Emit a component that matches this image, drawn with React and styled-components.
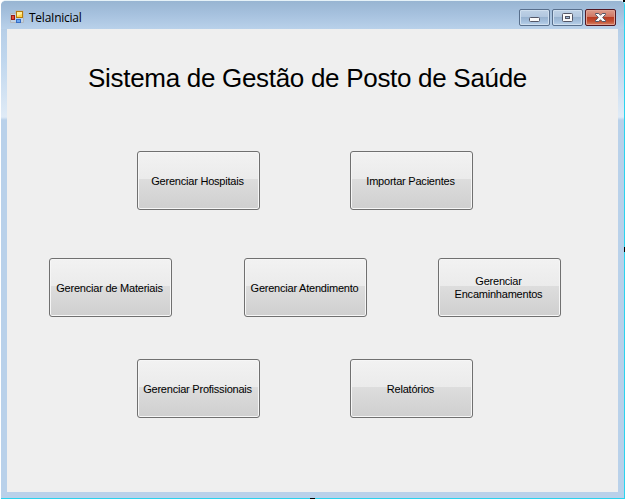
import React from "react";
import styled, { createGlobalStyle } from "styled-components";

const GlobalStyle = createGlobalStyle`
  html, body { margin: 0; padding: 0; background: #fff; overflow: hidden; }
  * { box-sizing: border-box; }
`;

const Stage = styled.div`
  position: relative;
  width: 625px;
  height: 499px;
  padding-left: 1px;
  background: #fff;
`;

const Window = styled.main`
  width: 624px;
  height: 499px;
  display: flex;
  flex-direction: column;
  border-right: 1px solid #2bd3ee;
  border-bottom: 1px solid #2bd3ee;
  border-top: 1px solid #e6f2f8;
  border-radius: 5px 5px 0 0;
  background:
    linear-gradient(180deg, #98b5d2 0, #a5c1dd 14px, #b7cfe8 30px, #c0d7ee 60px, #dbe8f5 108px, #e0ebf7 116px, #b9d1ea 119px, #b9d1ea 100%);
`;

const TitleBar = styled.header`
  height: 28px;
  flex: none;
  display: flex;
  align-items: flex-start;
  padding: 8px 8px 0 9px;
  background: linear-gradient(180deg, #98b5d2 0, #a6c1de 13px, #b9d1ea 28px);
  border-radius: 5px 5px 0 0;
`;

const AppIcon = styled.svg`
  width: 15px;
  height: 15px;
  margin-top: 1px;
  flex: none;
`;

const WindowTitle = styled.span`
  margin: 1px 0 0 4px;
  flex: 1;
  font: 12px/16px "Open Sans", "Noto Sans", sans-serif;
  letter-spacing: -0.25px;
  color: #000;
`;

const Controls = styled.div`
  display: flex;
  gap: 2px;
`;

const Control = styled.button`
  width: 31px;
  height: 17px;
  padding: 0;
  display: flex;
  align-items: center;
  justify-content: center;
  border: 1px solid ${(p) => (p.$close ? "#531822" : "#586f8c")};
  border-radius: 2px;
  box-shadow: inset 0 0 0 1px ${(p) => (p.$close ? "#e0a293" : "#cfdfef")};
  background: ${(p) =>
    p.$close
      ? "linear-gradient(180deg, #dc9c8b 0, #cf7562 46%, #b93c22 50%, #c14e32 75%, #d98465 100%)"
      : "linear-gradient(180deg, #bfd2e6 0, #b1c7df 46%, #98b3d0 50%, #a4bfdc 75%, #b9d1ea 100%)"};

  svg { display: block; flex: none; }
`;

const Client = styled.section`
  width: 611px;
  height: 463px;
  flex: none;
  margin-left: 6px;
  padding-top: 32px;
  background: #efefef;
`;

const Heading = styled.h1`
  margin: 0 0 0 81px;
  height: 34px;
  white-space: nowrap;
  font: 26px/34px "Liberation Sans", Arial, sans-serif;
  letter-spacing: -0.3px;
  color: #000;
`;

const ButtonRow = styled.div`
  display: grid;
  grid-template-columns: ${(p) => p.$columns};
  margin-top: ${(p) => p.$top}px;
  margin-left: ${(p) => p.$left}px;
`;

const MenuButton = styled.button`
  width: 123px;
  height: 59px;
  padding: 1px 3px 0 1px;
  border: 1px solid #707070;
  border-radius: 3px;
  box-shadow: inset 0 0 0 1px #f6f6f6;
  background: linear-gradient(180deg, #f2f2f2 0, #ebebeb 47%, #dddddd 48%, #cfcfcf 100%);
  font: 11px/13px "Liberation Sans", Arial, sans-serif;
  letter-spacing: -0.22px;
  color: #000;
  text-align: center;
`;

const BottomHandle = styled.i`
  position: absolute;
  left: 310px;
  bottom: 0;
  width: 5px;
  height: 1px;
  background: #000;
`;

const RightHandle = styled.i`
  position: absolute;
  right: 0;
  top: 247px;
  width: 1px;
  height: 5px;
  background: #000;
`;

const TopRightHandle = styled.i`
  position: absolute;
  right: 0;
  top: 0;
  width: 2px;
  height: 2px;
  background: #000;
`;

const rows = [
  { columns: "213px 123px", top: 56, left: 130, items: ["Gerenciar Hospitais", "Importar Pacientes"] },
  { columns: "195px 194px 123px", top: 48, left: 42, items: ["Gerenciar de Materiais", "Gerenciar Atendimento", "Gerenciar Encaminhamentos"] },
  { columns: "213px 123px", top: 42, left: 130, items: ["Gerenciar Profissionais", "Relatórios"] },
];

export default function App() {
  return (
    <Stage>
      <GlobalStyle />
      <Window>
        <TitleBar>
          <AppIcon viewBox="0 0 15 15">
            <path d="M.5 3.5h5v-3h8v12h-13z" fill="#c1d2e4" stroke="#b1b7bd" />
            <rect x="6.5" y="1.5" width="6" height="6" fill="#ffd54c" stroke="#b57a0b" />
            <path d="M7 2h5v2l-5 2z" fill="#ffee9c" />
            <rect x="1.5" y="5.5" width="3" height="4" fill="#e34a32" stroke="#991b16" />
            <rect x="6.5" y="9.5" width="4" height="3" fill="#6aa5f0" stroke="#346cc5" />
          </AppIcon>
          <WindowTitle>TelaInicial</WindowTitle>
          <Controls>
            <Control aria-label="Minimizar">
              <svg width="29" height="15" viewBox="0 0 29 15">
                <rect x="9.5" y="7.5" width="10" height="4" rx="1" fill="#fafafa" stroke="#535666" />
              </svg>
            </Control>
            <Control aria-label="Maximizar">
              <svg width="29" height="15" viewBox="0 0 29 15">
                <rect x="9.5" y="3.5" width="10" height="8" rx="1" fill="#fafafa" stroke="#535666" />
                <rect x="12.5" y="6.5" width="4" height="2" fill="#9ab5d2" stroke="#535666" />
              </svg>
            </Control>
            <Control $close aria-label="Fechar">
              <svg width="29" height="15" viewBox="0 0 29 15">
                <path d="M9.5 3.5h3.3l1.7 1.8 1.7-1.8h3.3v1l-2.8 3 2.8 3v1h-3.3l-1.7-1.8-1.7 1.8H9.5v-1l2.8-3-2.8-3z" fill="#fafafa" stroke="#535666" />
              </svg>
            </Control>
          </Controls>
        </TitleBar>
        <Client>
          <Heading>Sistema de Gestão de Posto de Saúde</Heading>
          {rows.map((row) => (
            <ButtonRow key={row.items[0]} $columns={row.columns} $top={row.top} $left={row.left}>
              {row.items.map((label) => (
                <MenuButton key={label}>{label}</MenuButton>
              ))}
            </ButtonRow>
          ))}
        </Client>
      </Window>
      <BottomHandle />
      <RightHandle />
      <TopRightHandle />
    </Stage>
  );
}
